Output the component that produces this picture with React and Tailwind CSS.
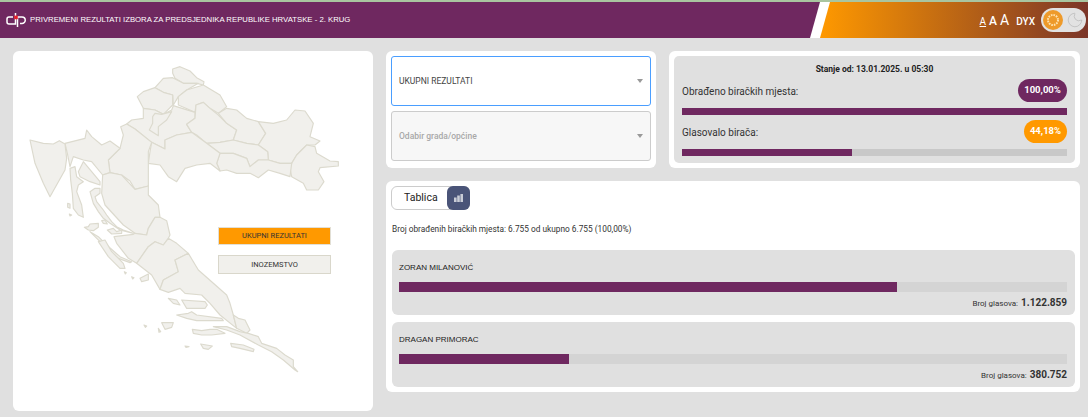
import { Moon } from 'lucide-react'

const regions = [
  '458,42 480,35 510,48 530,68 552,80 550,90 530,85 490,85 465,70 458,55',
  '430,70 458,68 490,85 535,85 500,105 475,125 460,150 458,120 430,112 405,98',
  '405,98 430,112 458,120 458,150 430,178 405,165 370,160 352,125 370,110',
  '550,90 575,105 600,120 620,155 595,175 570,160 550,142 528,150 525,172 475,150 475,125 500,105',
  '370,160 405,165 430,178 455,165 460,152 525,172 525,190 500,208 515,232 470,240 435,255 435,282 395,262 345,222 320,207 335,195 370,190',
  '405,175 425,178 455,170 440,195 415,215 415,242 388,225 398,205 398,185',
  '528,150 550,142 570,160 595,180 620,205 650,225 640,255 600,262 560,265 530,240 515,232 500,208 525,190',
  '595,175 620,160 650,165 680,190 715,200 737,235 715,270 680,265 640,255 650,225 620,205',
  '715,200 760,205 800,195 825,165 855,168 880,205 870,245 900,258 885,270 860,270 830,300 815,325 780,325 745,315 743,290 715,270 737,235',
  '860,270 885,275 890,295 930,318 955,320 955,333 900,338 895,350 912,380 895,405 860,405 850,385 815,365 810,340 815,325 830,300',
  '560,265 600,262 640,255 680,265 715,270 743,290 745,315 715,315 690,335 680,310 640,295 600,295',
  '600,295 640,295 680,310 690,335 715,315 745,315 780,325 815,325 810,365 780,355 745,345 715,368 690,355 650,355 620,345 600,348 590,325',
  '435,282 435,255 470,240 515,232 560,265 600,295 590,325 600,348 570,325 530,330 495,340 470,380 445,365 420,330 385,325 390,290 395,262',
  '320,207 345,222 395,262 385,290 385,325 385,393 345,403 330,378 305,360 270,353 265,315 300,280 310,240 302,215',
  '135,265 195,250 200,225 215,245 245,270 270,258 300,280 265,315 270,353 248,360 215,320 190,315 160,305 150,335 143,300',
  '30,255 70,265 100,267 118,257 135,267 140,310 135,345 90,425 70,385 45,325',
  '248,360 270,353 305,360 345,403 385,393 385,420 415,450 420,487 405,487 385,520 380,540 345,535 310,510 255,450 245,415',
  '405,487 420,487 440,497 450,540 445,550 430,570 405,560 385,575 350,625 325,610 290,565 282,545 340,538 345,535 380,540 385,520',
  '350,625 385,575 405,560 430,570 445,550 470,565 505,595 465,615 475,650 430,675 420,703 395,660',
  '465,615 505,595 535,645 620,720 630,745 640,780 650,820 600,780 570,745 545,720 495,715 480,700 445,712 420,703 430,675 475,650',
  '640,780 655,790 675,795 690,825 680,835 650,820',
  '580,815 620,815 660,830 685,835 715,845 725,865 770,880 795,900 820,915 820,935 833,950 825,945 790,915 755,890 715,870 660,840 620,825',
]

const islands = [
  '190,320 215,350 240,380 240,390 210,380 180,365 175,350',
  '150,340 165,335 170,365 190,380 175,390 170,410 185,450 190,487 175,480 160,460 157,415 152,375',
  '143,445 150,447 150,460 143,457',
  '148,477 155,480 150,483',
  '210,410 225,400 240,400 240,415 225,425 230,440 250,465 260,480 275,500 290,515 310,525 340,535 300,525 270,505 250,490 235,470 220,445',
  '245,497 255,495 262,507 250,505',
  '262,525 280,520 290,530 305,525 305,535 275,537',
  '193,517 205,515 210,507 235,505 235,517 220,527 205,525',
  '210,530 235,545 260,570 300,605 335,620 330,623 295,610 255,575',
  '235,560 255,555 275,590 310,625 315,640 300,640 265,605',
  '360,670 385,657 385,675 365,680',
  '313,650 319,653 316,657',
  '335,665 342,668 338,672',
  '445,730 470,735 480,750 460,745',
  '485,735 555,740 562,750 555,760 500,760',
  '470,780 505,775 515,770 530,780 605,790 610,797 530,797 500,790',
  '517,823 545,827 570,823 590,823 615,835 575,840 545,840 520,835',
  '425,803 460,803 455,817 435,823',
  '415,820 422,830 417,832',
  '542,867 577,873 565,883 550,880',
  '632,865 670,870 702,883 700,890 660,880 635,875',
  '495,873 507,875 498,877',
  '372,810 380,813 376,817',
]

function CroatiaMap() {
  return (
    <svg viewBox="-21 -12 1080 1080" className="w-full h-full block">
      <g fill="#f1f0ec" stroke="#dcdace" strokeWidth="3.5" strokeLinejoin="round">
        {regions.map((points) => (
          <polygon key={points} points={points} />
        ))}
        {islands.map((points) => (
          <polygon key={points} points={points} />
        ))}
      </g>
    </svg>
  )
}

function Logo() {
  return (
    <svg viewBox="0 0 20 15" className="w-[20px] h-[15px] shrink-0" fill="none" stroke="#fff" strokeWidth="1.5">
      <path d="M9.5 0v11H3a2 2 0 0 1-2-2V6a2 2 0 0 1 2-2h4" />
      <path d="M11.5 14V4h4.5a3 3 0 0 1 0 6.5H14" />
      <rect x="8.2" y="2.6" width="3.6" height="3.6" fill="#e8202a" stroke="none" />
    </svg>
  )
}

function SunKnob() {
  return (
    <span className="w-[20px] h-[20px] rounded-full bg-[#ee9a2a] flex items-center justify-center">
      <svg viewBox="0 0 14 14" className="w-[14px] h-[14px]" fill="none">
        <circle cx="7" cy="7" r="5" stroke="#ffe3b0" strokeWidth="2" strokeDasharray="1.6 1" />
      </svg>
    </span>
  )
}

function Select({ label, disabled }) {
  return (
    <div
      className={
        disabled
          ? 'h-[50px] rounded-[3px] border border-[#cccccc] bg-[#f7f7f7] flex items-center justify-between pl-[7px] pr-[7px]'
          : 'h-[50px] rounded-[3px] border border-[#4a9eff] bg-white flex items-center justify-between pl-[7px] pr-[7px]'
      }
    >
      <span className={disabled ? 'text-[8.5px] font-medium text-[#a8a8a8]' : 'text-[8.5px] text-[#444444]'}>{label}</span>
      <span className="w-0 h-0 border-x-[3.5px] border-x-transparent border-t-[4px] border-t-[#999999]" />
    </div>
  )
}

function StatRow({ label, value, pillClass, barClass }) {
  return (
    <div>
      <div className="flex items-center justify-between">
        <span className="pt-[2px] text-[10px] text-[#333333]">{label}</span>
        <span className={pillClass}>{value}</span>
      </div>
      <div className="h-[7px] mt-[6px] bg-[#c8c8c8]">
        <div className={barClass} />
      </div>
    </div>
  )
}

function Candidate({ name, votes, barClass }) {
  return (
    <div className="h-[65px] rounded-[6px] bg-[#e0e0e0] pt-[13px] pl-[7px] pr-[8px]">
      <div className="text-[8px] leading-[10px] text-[#222222] font-['Liberation_Sans',sans-serif]">{name}</div>
      <div className="h-[10px] mt-[9px] bg-[#d4d4d4]">
        <div className={barClass} />
      </div>
      <div className="flex items-baseline justify-end gap-[3px] mt-[4px] leading-[14px] text-[#333333]">
        <span className="text-[8px]">Broj glasova:</span>
        <span className="text-[10px] font-bold">{votes}</span>
      </div>
    </div>
  )
}

export default function App() {
  return (
    <div className="min-h-[417px] bg-[#e0e0e0] font-['Roboto',sans-serif]">
      <header className="h-[38px] flex bg-white border-t-2 border-t-[#a9c5a0]">
        <div className="w-[820px] flex items-center gap-[4px] pl-[6px] bg-[#6f2860] [clip-path:polygon(0_0,100%_0,calc(100%-10px)_100%,0_100%)]">
          <Logo />
          <span className="text-[7.75px] text-white font-['Liberation_Sans',sans-serif]">
            PRIVREMENI REZULTATI IZBORA ZA PREDSJEDNIKA REPUBLIKE HRVATSKE - 2. KRUG
          </span>
        </div>
        <div className="flex-1 flex items-center justify-end pr-[2px] bg-[linear-gradient(90deg,#ff9900_0%,#7b3528_100%)] [clip-path:polygon(10px_0,100%_0,100%_100%,0_100%)]">
          <div className="flex items-baseline gap-[3px] text-white">
            <span className="text-[10px] underline">A</span>
            <span className="text-[12px] font-medium">A</span>
            <span className="text-[14px]">A</span>
            <span className="text-[10px] font-medium ml-[4px]">DYX</span>
          </div>
          <div className="ml-[6px] w-[45px] h-[24px] rounded-full bg-[#e2e2e2] flex items-center justify-between pl-[2px] pr-[2px]">
            <SunKnob />
            <Moon size={18} color="#bdbdbd" strokeWidth={1.1} />
          </div>
        </div>
      </header>

      <main className="flex pt-[13px] pl-[13px] pr-[8px] gap-[13px]">
        <section className="relative w-[360px] h-[360px] shrink-0 rounded-[6px] bg-white">
          <CroatiaMap />
          <div className="absolute left-[205px] top-[176px] w-[113px] h-[18px] bg-[#ff9900] border border-[#e2dfd5] flex items-center justify-center text-[7.5px] text-[#333333]">
            UKUPNI REZULTATI
          </div>
          <div className="absolute left-[205px] top-[204px] w-[113px] h-[19px] bg-[#f1f0ec] border border-[#d9d7cb] flex items-center justify-center text-[7.5px] text-[#333333]">
            INOZEMSTVO
          </div>
        </section>

        <div className="flex-1 flex flex-col gap-[13px]">
          <div className="flex gap-[13px]">
            <section className="w-[270px] h-[117px] rounded-[6px] bg-white p-[5px] flex flex-col gap-[5px]">
              <Select label="UKUPNI REZULTATI" />
              <Select label="Odabir grada/općine" disabled />
            </section>
            <section className="flex-1 h-[117px] rounded-[6px] bg-white p-[5px]">
              <div className="h-full rounded-[5px] bg-[#e0e0e0] px-[8px] pt-[8px]">
                <div className="text-center text-[8.5px] leading-[10px] font-bold text-[#222222]">Stanje od: 13.01.2025. u 05:30</div>
                <div className="mt-[5px] flex flex-col gap-[5px]">
                  <StatRow
                    label="Obrađeno biračkih mjesta:"
                    value="100,00%"
                    pillClass="w-[49px] h-[23px] rounded-full bg-[#6f2860] text-white text-[9.5px] font-bold flex items-center justify-center"
                    barClass="h-full w-full bg-[#6f2860]"
                  />
                  <StatRow
                    label="Glasovalo birača:"
                    value="44,18%"
                    pillClass="w-[43px] h-[23px] rounded-full bg-[#ff9900] text-white text-[9.5px] font-bold flex items-center justify-center"
                    barClass="h-full w-[44.18%] bg-[#6f2860]"
                  />
                </div>
              </div>
            </section>
          </div>

          <section className="h-[211px] rounded-[6px] bg-white pt-[5px] pl-[5px] pr-[5px]">
            <div className="flex w-[79px] h-[24px] rounded-[6px] border border-[#cccccc] items-center justify-between">
              <span className="pl-[12px] text-[10.5px] text-[#222222]">Tablica</span>
              <span className="w-[23px] h-[24px] -mr-px rounded-[6px] bg-[#4a5478] flex items-center justify-center">
                <svg viewBox="0 0 9 8" className="w-[9px] h-[8px]" fill="#c9ccd6">
                  <rect x="0" y="3.5" width="2.6" height="4.5" />
                  <rect x="3.2" y="1.5" width="2.6" height="6.5" />
                  <rect x="6.4" y="0" width="2.6" height="8" />
                </svg>
              </span>
            </div>
            <div className="mt-[14px] text-[8.3px] leading-[10px] text-[#333333] pl-[1px]">
              Broj obrađenih biračkih mjesta: 6.755 od ukupno 6.755 (100,00%)
            </div>
            <div className="mt-[16px] ml-[1px] flex flex-col gap-[7px]">
              <Candidate name="ZORAN MILANOVIĆ" votes="1.122.859" barClass="h-full w-[74.6%] bg-[#6f2860]" />
              <Candidate name="DRAGAN PRIMORAC" votes="380.752" barClass="h-full w-[25.4%] bg-[#6f2860]" />
            </div>
          </section>
        </div>
      </main>
    </div>
  )
}
